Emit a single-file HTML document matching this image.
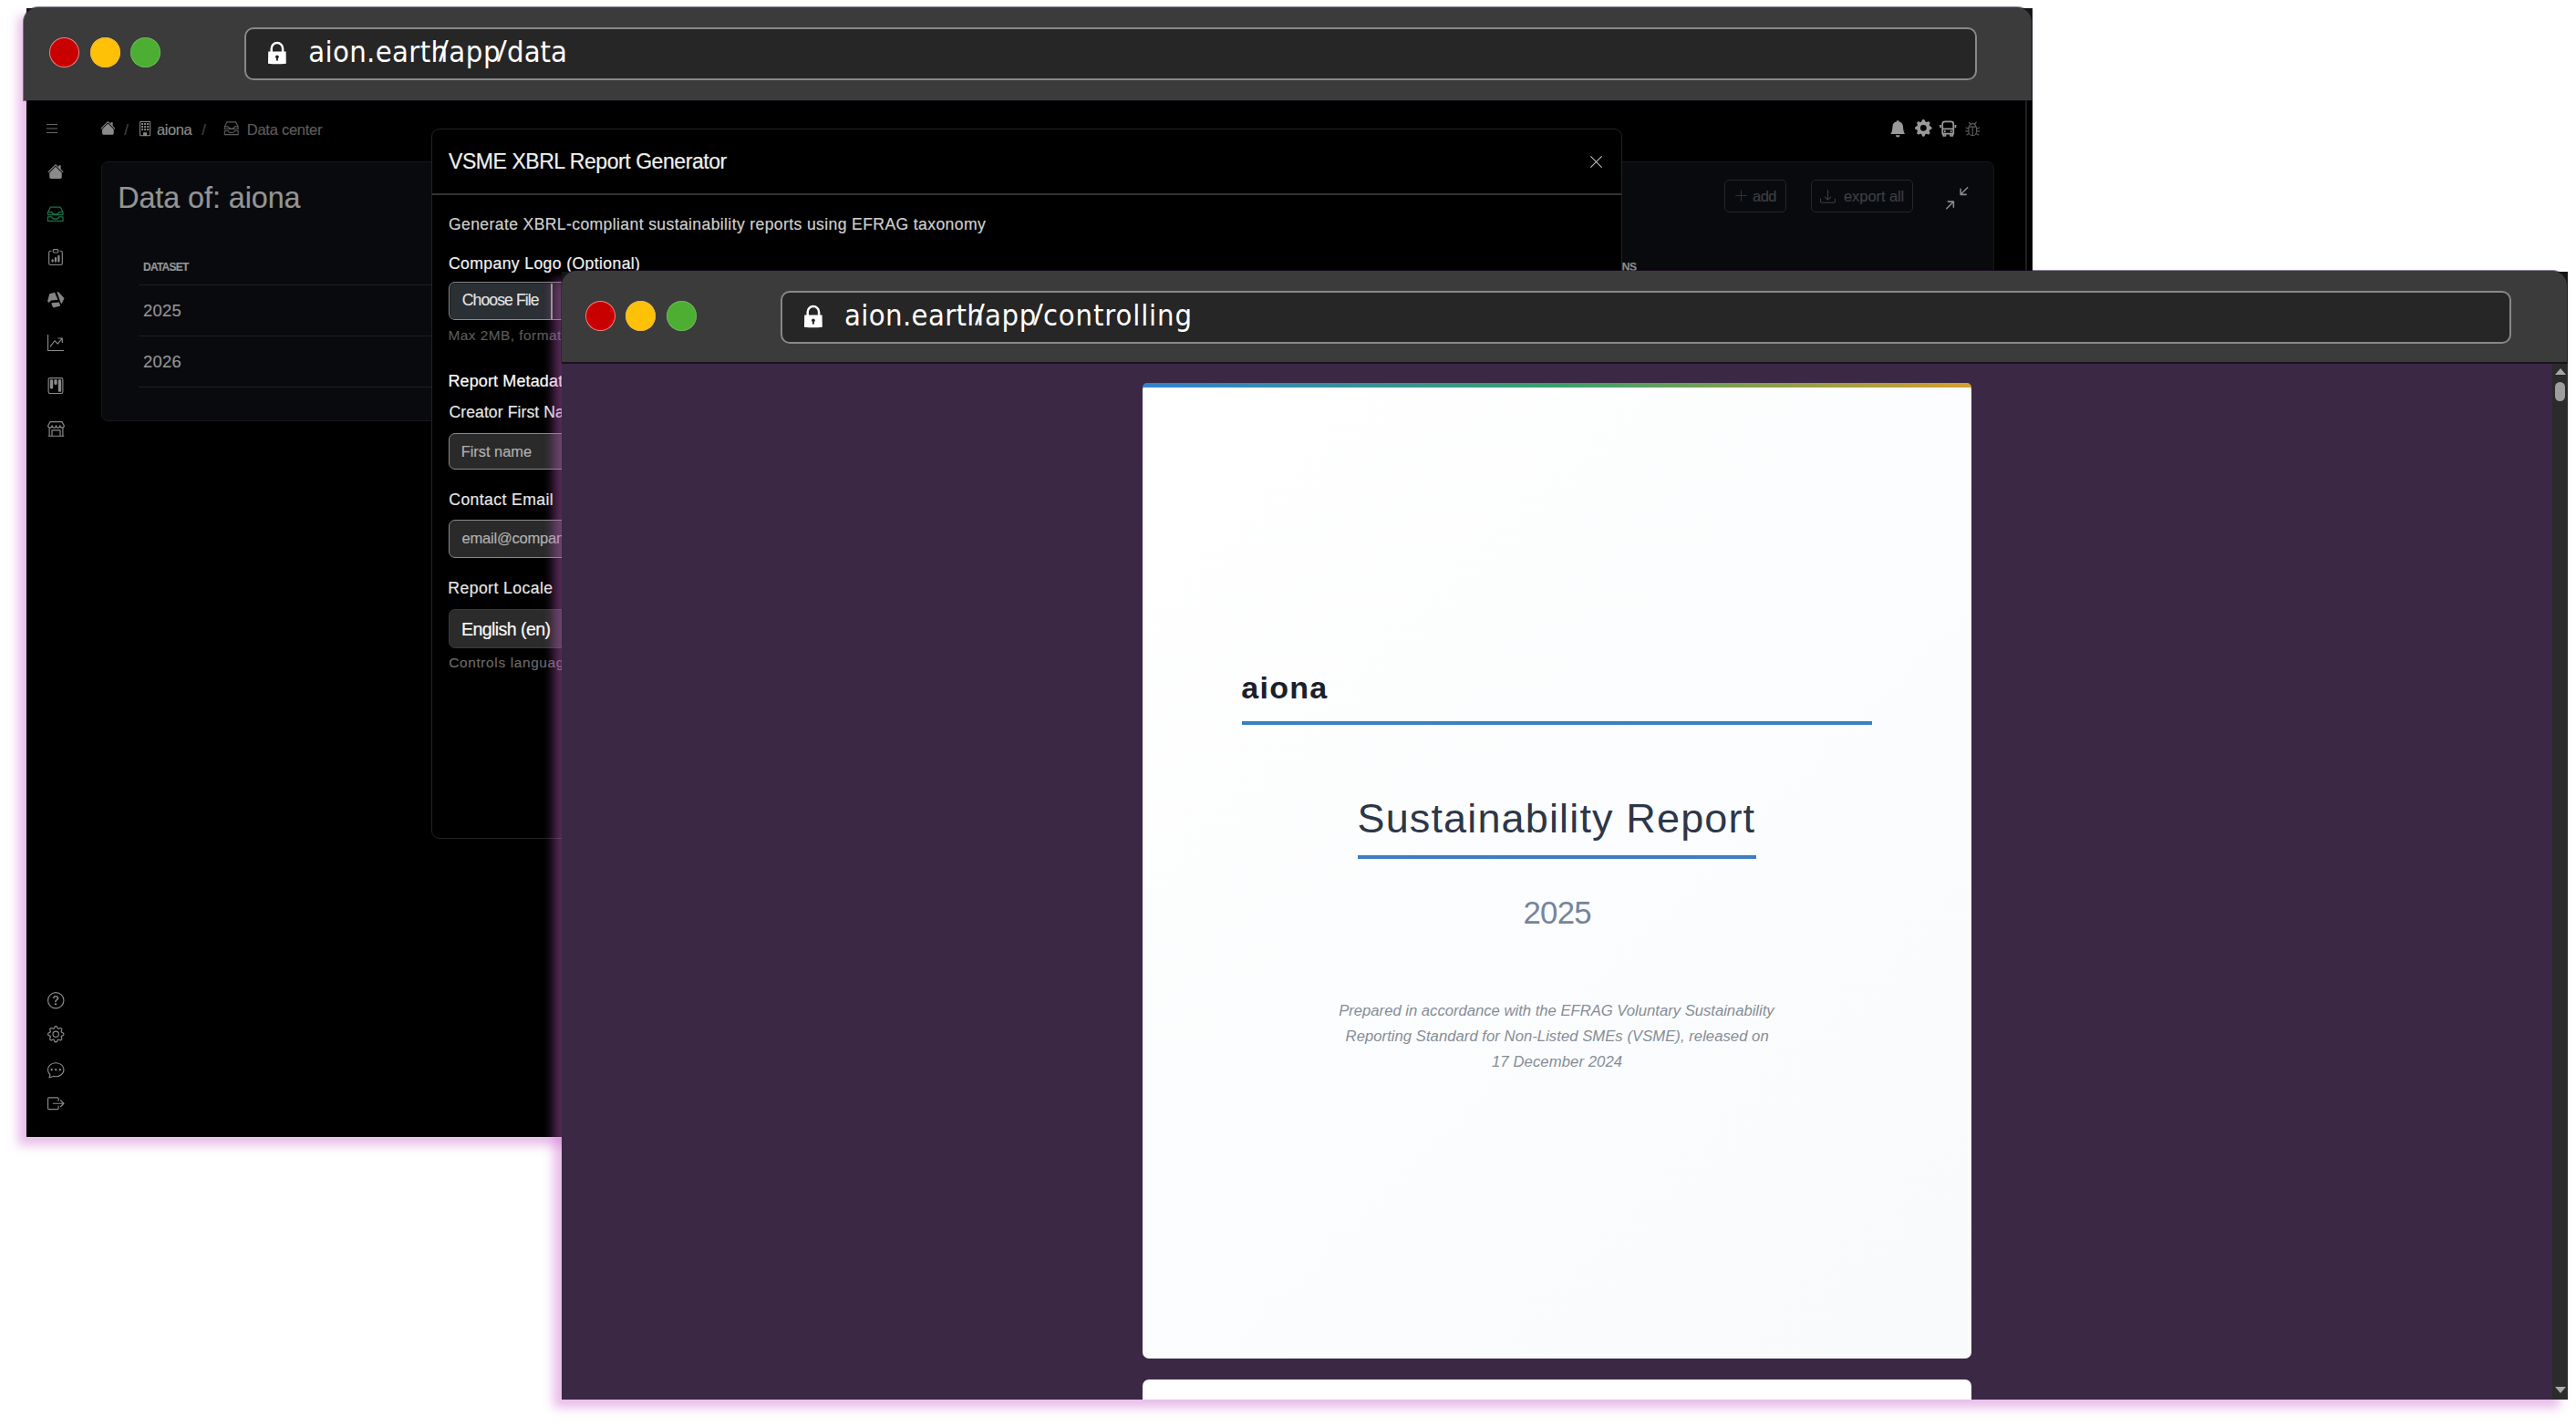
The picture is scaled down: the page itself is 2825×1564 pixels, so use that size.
<!DOCTYPE html><html lang="en"><head><meta charset="utf-8"><title>aion</title><style>
html,body{margin:0;padding:0}
body{width:2825px;height:1564px;background:#fff;position:relative;overflow:hidden;font-family:"Liberation Sans",sans-serif}
.b{position:absolute}
.t{position:absolute;white-space:pre;line-height:1}
.i{position:absolute;overflow:visible}
.w1 .t{-webkit-text-stroke:.18px}
</style></head><body>
<div class="b" style="left:29px;top:9px;width:2200px;height:1238px;box-shadow:-9px 9px 11px rgba(205,100,205,.43)"></div><div class="b" style="left:29px;top:9px;width:2200px;height:1238px;background:#000;overflow:hidden"><div class="b" style="left:-29px;top:-9px"><div class="w1"><div class="b" style="left:2221.00px;top:110.00px;width:1.50px;height:1140.00px;background:#1e1e1e"></div><svg class="i" style="left:47.60px;top:131.60px;width:18px;height:18px;color:#686868;" viewBox="0 0 16 16" fill="currentColor"><path fill-rule="evenodd" d="M2.5 12a.5.5 0 0 1 .5-.5h10a.5.5 0 0 1 0 1H3a.5.5 0 0 1-.5-.5zm0-4a.5.5 0 0 1 .5-.5h10a.5.5 0 0 1 0 1H3a.5.5 0 0 1-.5-.5zm0-4a.5.5 0 0 1 .5-.5h10a.5.5 0 0 1 0 1H3a.5.5 0 0 1-.5-.5z"/></svg><svg class="i" style="left:51.90px;top:178.90px;width:18px;height:18px;color:#8a8a8a;" viewBox="0 0 16 16" fill="currentColor"><path d="M8.707 1.5a1 1 0 0 0-1.414 0L.646 8.146a.5.5 0 0 0 .708.708L8 2.207l6.646 6.647a.5.5 0 0 0 .708-.708L13 5.793V2.5a.5.5 0 0 0-.5-.5h-1a.5.5 0 0 0-.5.5v1.293L8.707 1.5Z"/><path d="m8 3.293 6 6V13.5a1.5 1.5 0 0 1-1.5 1.5h-9A1.5 1.5 0 0 1 2 13.5V9.293l6-6Z"/></svg><svg class="i" style="left:51.45px;top:225.05px;width:19.5px;height:19.5px;color:#1c7049;" viewBox="0 0 16 16" fill="currentColor"><path fill="none" stroke="currentColor" stroke-width="1" stroke-linejoin="round" d="M1.200 6.300 3.600 1.700h8.800l2.400 4.600v2.400H1.200zM1.200 6.300h3.600c.2 1.300 1.500 1.900 3.200 1.900s3-.6 3.200-1.900h3.600M1.200 10.500h3.600c.2 1.300 1.500 1.900 3.200 1.900s3-.6 3.200-1.900h3.600v3.800H1.200z"/></svg><svg class="i" style="left:52.00px;top:272.80px;width:18px;height:18px;color:#8a8a8a;" viewBox="0 0 16 16" fill="currentColor"><path d="M4 11a1 1 0 1 1 2 0v1a1 1 0 1 1-2 0v-1zm6-4a1 1 0 1 1 2 0v5a1 1 0 1 1-2 0V7zM7 9a1 1 0 0 1 2 0v3a1 1 0 1 1-2 0V9z"/><path d="M4 1.500H3a2 2 0 0 0-2 2V14a2 2 0 0 0 2 2h10a2 2 0 0 0 2-2V3.500a2 2 0 0 0-2-2h-1v1h1a1 1 0 0 1 1 1V14a1 1 0 0 1-1 1H3a1 1 0 0 1-1-1V3.500a1 1 0 0 1 1-1h1v-1z"/><path d="M9.500 1a.5.5 0 0 1 .5.5v1a.5.5 0 0 1-.5.5h-3a.5.5 0 0 1-.5-.5v-1a.5.5 0 0 1 .5-.5h3zm-3-1A1.500 1.500 0 0 0 5 1.500v1A1.500 1.500 0 0 0 6.500 4h3A1.500 1.500 0 0 0 11 2.500v-1A1.500 1.500 0 0 0 9.500 0h-3z"/></svg><svg class="i" style="left:46px;top:314px;width:30px;height:30px" viewBox="0 0 30 30" fill="#858585"><path d="M8.300 8.300 14 6.700 17.500 14.700 10.100 15.600 7.400 17.900 6.100 16.200zM16.400 6.100 18.300 6.200 24.500 13.200 21.600 19 20.600 18.300zM10.500 18.300 18.900 17.500 20.200 21.500 12.600 23.400 10.900 20.800z"/></svg><svg class="i" style="left:52.00px;top:366.80px;width:18px;height:18px;color:#8a8a8a;" viewBox="0 0 16 16" fill="currentColor"><path fill-rule="evenodd" d="M0 0h1v15h15v1H0V0Zm10 3.500a.5.5 0 0 1 .5-.5h4a.5.5 0 0 1 .5.5v4a.5.5 0 0 1-1 0V4.900l-3.613 4.417a.5.5 0 0 1-.74.037L7.060 6.767l-3.656 5.027a.5.5 0 0 1-.808-.588l4-5.500a.5.5 0 0 1 .758-.060l2.609 2.610L13.445 4H10.500a.5.5 0 0 1-.5-.5Z"/></svg><svg class="i" style="left:52.00px;top:413.70px;width:18px;height:18px;color:#8a8a8a;" viewBox="0 0 16 16" fill="currentColor"><path d="M13.500 1a1 1 0 0 1 1 1v12a1 1 0 0 1-1 1h-11a1 1 0 0 1-1-1V2a1 1 0 0 1 1-1h11zm-11-1a2 2 0 0 0-2 2v12a2 2 0 0 0 2 2h11a2 2 0 0 0 2-2V2a2 2 0 0 0-2-2h-11z"/><path d="M6.500 3a1 1 0 0 1 1-1h1a1 1 0 0 1 1 1v3a1 1 0 0 1-1 1h-1a1 1 0 0 1-1-1V3zm-4 0a1 1 0 0 1 1-1h1a1 1 0 0 1 1 1v7a1 1 0 0 1-1 1h-1a1 1 0 0 1-1-1V3zm8 0a1 1 0 0 1 1-1h1a1 1 0 0 1 1 1v10a1 1 0 0 1-1 1h-1a1 1 0 0 1-1-1V3z"/></svg><svg class="i" style="left:51.50px;top:460.90px;width:19px;height:19px;color:#8a8a8a;" viewBox="0 0 16 16" fill="currentColor"><path fill="none" stroke="currentColor" stroke-width="1" stroke-linejoin="round" d="M2.600 1.400h10.800l2 3.400c0 1.200-.8 2-1.800 2s-1.900-.8-1.900-2c0 1.200-.8 2-1.800 2S8 6 8 4.800C8 6 7.200 6.800 6.100 6.800s-1.800-.8-1.800-2c0 1.200-.9 2-1.900 2S.6 6 .6 4.800zM1.800 7v7.500h12.400V7M.6 14.500h14.800M4.200 14.500V9.200h7.600v5.300"/></svg><svg class="i" style="left:51.75px;top:1087.65px;width:18.5px;height:18.5px;color:#8a8a8a;" viewBox="0 0 16 16" fill="currentColor"><path d="M8 15A7 7 0 1 1 8 1a7 7 0 0 1 0 14zm0 1A8 8 0 1 0 8 0a8 8 0 0 0 0 16z"/><path d="M5.255 5.786a.237.237 0 0 0 .241.247h.825c.138 0 .248-.113.266-.25.09-.656.54-1.134 1.342-1.134.686 0 1.314.343 1.314 1.168 0 .635-.374.927-.965 1.371-.673.489-1.206 1.06-1.168 1.987l.003.217a.25.25 0 0 0 .25.246h.811a.25.25 0 0 0 .25-.25v-.105c0-.718.273-.927 1.01-1.486.609-.463 1.244-.977 1.244-2.056 0-1.511-1.276-2.241-2.673-2.241-1.267 0-2.655.59-2.75 2.286zm1.557 5.763c0 .533.425.927 1.01.927.609 0 1.028-.394 1.028-.927 0-.552-.42-.94-1.029-.94-.584 0-1.009.388-1.009.94z"/></svg><svg class="i" style="left:51.75px;top:1125.45px;width:18.5px;height:18.5px;color:#8a8a8a;" viewBox="0 0 16 16" fill="currentColor"><path d="M8 4.754a3.246 3.246 0 1 0 0 6.492 3.246 3.246 0 0 0 0-6.492zM5.754 8a2.246 2.246 0 1 1 4.492 0 2.246 2.246 0 0 1-4.492 0z"/><path d="M9.796 1.343c-.527-1.79-3.065-1.79-3.592 0l-.094.319a.873.873 0 0 1-1.255.52l-.292-.16c-1.64-.892-3.433.902-2.54 2.541l.159.292a.873.873 0 0 1-.52 1.255l-.319.094c-1.79.527-1.79 3.065 0 3.592l.319.094a.873.873 0 0 1 .52 1.255l-.16.292c-.892 1.64.901 3.434 2.541 2.54l.292-.159a.873.873 0 0 1 1.255.52l.094.319c.527 1.79 3.065 1.79 3.592 0l.094-.319a.873.873 0 0 1 1.255-.52l.292.16c1.64.893 3.434-.902 2.54-2.541l-.159-.292a.873.873 0 0 1 .52-1.255l.319-.094c1.79-.527 1.79-3.065 0-3.592l-.319-.094a.873.873 0 0 1-.52-1.255l.16-.292c.893-1.64-.902-3.433-2.541-2.54l-.292.159a.873.873 0 0 1-1.255-.52l-.094-.319zm-2.633.283c.246-.835 1.428-.835 1.674 0l.094.319a1.873 1.873 0 0 0 2.693 1.115l.291-.16c.764-.415 1.6.42 1.184 1.185l-.159.292a1.873 1.873 0 0 0 1.116 2.692l.318.094c.835.246.835 1.428 0 1.674l-.319.094a1.873 1.873 0 0 0-1.115 2.693l.16.291c.415.764-.42 1.6-1.185 1.184l-.291-.159a1.873 1.873 0 0 0-2.693 1.116l-.094.318c-.246.835-1.428.835-1.674 0l-.094-.319a1.873 1.873 0 0 0-2.692-1.115l-.292.16c-.764.415-1.6-.42-1.184-1.185l.159-.291A1.873 1.873 0 0 0 1.945 8.93l-.319-.094c-.835-.246-.835-1.428 0-1.674l.319-.094A1.873 1.873 0 0 0 3.06 4.377l-.16-.292c-.415-.764.42-1.6 1.185-1.184l.292.159a1.873 1.873 0 0 0 2.692-1.115l.094-.319z"/></svg><svg class="i" style="left:51.75px;top:1163.75px;width:18.5px;height:18.5px;color:#8a8a8a;" viewBox="0 0 16 16" fill="currentColor"><path d="M5 8a1 1 0 1 1-2 0 1 1 0 0 1 2 0zm4 0a1 1 0 1 1-2 0 1 1 0 0 1 2 0zm3 1a1 1 0 1 0 0-2 1 1 0 0 0 0 2z"/><path d="m2.165 15.803.02-.004c1.83-.363 2.948-.842 3.468-1.105A9.060 9.060 0 0 0 8 15c4.418 0 8-3.134 8-7s-3.582-7-8-7-8 3.134-8 7c0 1.760.743 3.370 1.970 4.600a10.437 10.437 0 0 1-.524 2.318l-.003.011a10.722 10.722 0 0 1-.244.637c-.079.186.074.394.273.362a21.673 21.673 0 0 0 .693-.125zm.8-3.108a1 1 0 0 0-.287-.801C1.618 10.830 1 9.468 1 8c0-3.192 3.004-6 7-6s7 2.808 7 6c0 3.193-3.004 6-7 6a8.060 8.060 0 0 1-2.088-.272 1 1 0 0 0-.711.074c-.387.196-1.240.570-2.634.893a10.970 10.970 0 0 0 .398-2z"/></svg><svg class="i" style="left:51.75px;top:1200.75px;width:18.5px;height:18.5px;color:#8a8a8a;" viewBox="0 0 16 16" fill="currentColor"><path fill-rule="evenodd" d="M10 12.500a.5.5 0 0 1-.5.5h-8a.5.5 0 0 1-.5-.5v-9a.5.5 0 0 1 .5-.5h8a.5.5 0 0 1 .5.5v2a.5.5 0 0 0 1 0v-2A1.500 1.500 0 0 0 9.500 2h-8A1.500 1.500 0 0 0 0 3.500v9A1.500 1.500 0 0 0 1.500 14h8a1.500 1.500 0 0 0 1.500-1.500v-2a.5.5 0 0 0-1 0v2z"/><path fill-rule="evenodd" d="M15.854 8.354a.5.5 0 0 0 0-.708l-3-3a.5.5 0 0 0-.708.708L14.293 7.500H5.500a.5.5 0 0 0 0 1h8.793l-2.147 2.146a.5.5 0 0 0 .708.708l3-3z"/></svg><svg class="i" style="left:110.20px;top:132.40px;width:16.8px;height:16.8px;color:#8a8a8a;" viewBox="0 0 16 16" fill="currentColor"><path d="M8.707 1.5a1 1 0 0 0-1.414 0L.646 8.146a.5.5 0 0 0 .708.708L8 2.207l6.646 6.647a.5.5 0 0 0 .708-.708L13 5.793V2.5a.5.5 0 0 0-.5-.5h-1a.5.5 0 0 0-.5.5v1.293L8.707 1.5Z"/><path d="m8 3.293 6 6V13.5a1.5 1.5 0 0 1-1.5 1.5h-9A1.5 1.5 0 0 1 2 13.5V9.293l6-6Z"/></svg><span class="t" style="left:136.20px;top:134.43px;font-size:16.5px;color:#444;">/</span><svg class="i" style="left:151.40px;top:132.80px;width:16.2px;height:16.2px;color:#8a8a8a;" viewBox="0 0 16 16" fill="currentColor"><path d="M4 2.500a.5.5 0 0 1 .5-.5h1a.5.5 0 0 1 .5.5v1a.5.5 0 0 1-.5.5h-1a.5.5 0 0 1-.5-.5v-1Zm3 0a.5.5 0 0 1 .5-.5h1a.5.5 0 0 1 .5.5v1a.5.5 0 0 1-.5.5h-1a.5.5 0 0 1-.5-.5v-1Zm3.500-.5a.5.5 0 0 0-.5.5v1a.5.5 0 0 0 .5.5h1a.5.5 0 0 0 .5-.5v-1a.5.5 0 0 0-.5-.5h-1ZM4 5.500a.5.5 0 0 1 .5-.5h1a.5.5 0 0 1 .5.5v1a.5.5 0 0 1-.5.5h-1a.5.5 0 0 1-.5-.5v-1ZM7.500 5a.5.5 0 0 0-.5.5v1a.5.5 0 0 0 .5.5h1a.5.5 0 0 0 .5-.5v-1a.5.5 0 0 0-.5-.5h-1Zm2.500.5a.5.5 0 0 1 .5-.5h1a.5.5 0 0 1 .5.5v1a.5.5 0 0 1-.5.5h-1a.5.5 0 0 1-.5-.5v-1ZM4.500 8a.5.5 0 0 0-.5.5v1a.5.5 0 0 0 .5.5h1a.5.5 0 0 0 .5-.5v-1a.5.5 0 0 0-.5-.5h-1Zm2.500.5a.5.5 0 0 1 .5-.5h1a.5.5 0 0 1 .5.5v1a.5.5 0 0 1-.5.5h-1a.5.5 0 0 1-.5-.5v-1Zm3.500-.5a.5.5 0 0 0-.5.5v1a.5.5 0 0 0 .5.5h1a.5.5 0 0 0 .5-.5v-1a.5.5 0 0 0-.5-.5h-1Z"/><path d="M2 1a1 1 0 0 1 1-1h10a1 1 0 0 1 1 1v14a1 1 0 0 1-1 1H3a1 1 0 0 1-1-1V1Zm11 0H3v14h3v-2.500a.5.5 0 0 1 .5-.5h3a.5.5 0 0 1 .5.5V15h3V1Z"/></svg><span class="t" style="left:172.00px;top:134.43px;font-size:16.5px;color:#8a8a8a;letter-spacing:-0.449px;">aiona</span><span class="t" style="left:221.20px;top:134.43px;font-size:16.5px;color:#444;">/</span><svg class="i" style="left:245.45px;top:132.15px;width:17.5px;height:17.5px;color:#5c5c5c;" viewBox="0 0 16 16" fill="currentColor"><path fill="none" stroke="currentColor" stroke-width="1" stroke-linejoin="round" d="M1.200 6.300 3.600 1.700h8.800l2.400 4.600v2.400H1.200zM1.200 6.300h3.600c.2 1.300 1.500 1.900 3.200 1.900s3-.6 3.200-1.900h3.600M1.200 10.500h3.600c.2 1.300 1.500 1.900 3.200 1.900s3-.6 3.200-1.900h3.600v3.800H1.200z"/></svg><span class="t" style="left:270.80px;top:134.43px;font-size:16.5px;color:#5c5c5c;letter-spacing:-0.260px;">Data center</span><svg class="i" style="left:2072.25px;top:131.55px;width:18.5px;height:18.5px;color:#9a9a9a;" viewBox="0 0 16 16" fill="currentColor"><path d="M8 16a2 2 0 0 0 2-2H6a2 2 0 0 0 2 2zm.995-14.901a1 1 0 1 0-1.99 0A5.002 5.002 0 0 0 3 6c0 1.098-.5 6-2 7h14c-1.500-1-2-5.902-2-7 0-2.420-1.720-4.440-4.005-4.901z"/></svg><svg class="i" style="left:2099.55px;top:131.45px;width:18.7px;height:18.7px;color:#9a9a9a;" viewBox="0 0 16 16" fill="currentColor"><path d="M9.405 1.05c-.413-1.4-2.397-1.4-2.81 0l-.1.34a1.464 1.464 0 0 1-2.105.872l-.31-.17c-1.283-.698-2.686.705-1.987 1.987l.169.311c.446.82.023 1.841-.872 2.105l-.34.1c-1.4.413-1.4 2.397 0 2.81l.34.1a1.464 1.464 0 0 1 .872 2.105l-.17.31c-.698 1.283.705 2.686 1.987 1.987l.311-.169a1.464 1.464 0 0 1 2.105.872l.1.34c.413 1.4 2.397 1.4 2.81 0l.1-.34a1.464 1.464 0 0 1 2.105-.872l.31.17c1.283.698 2.686-.705 1.987-1.987l-.169-.311a1.464 1.464 0 0 1 .872-2.105l.34-.1c1.4-.413 1.4-2.397 0-2.81l-.34-.1a1.464 1.464 0 0 1-.872-2.105l.17-.31c.698-1.283-.705-2.686-1.987-1.987l-.311.169a1.464 1.464 0 0 1-2.105-.872l-.1-.34zM8 10.93a2.929 2.929 0 1 1 0-5.86 2.929 2.929 0 0 1 0 5.858z"/></svg><svg class="i" style="left:2127.05px;top:131.55px;width:18.5px;height:18.5px;color:#9a9a9a;" viewBox="0 0 16 16" fill="currentColor"><path fill="none" stroke="currentColor" stroke-width="1.500" stroke-linejoin="round" d="M2.800 12.700V3.400c0-1.300 1-2.200 2.300-2.200h5.800c1.300 0 2.300.9 2.300 2.200v9.300zM2.800 8.200h10.400M3.600 12.700v2h2v-2M10.400 12.700v2h2v-2M.9 4.400v2.800M15.100 4.400v2.800"/><circle cx="5" cy="10.500" r=".9"/><circle cx="11" cy="10.500" r=".9"/></svg><svg class="i" style="left:2154.45px;top:131.55px;width:18.5px;height:18.5px;color:#5a5a5a;" viewBox="0 0 16 16" fill="currentColor"><path fill="none" stroke="currentColor" stroke-width="1" stroke-linecap="round" d="M4.300 6.200h7.400v4.300c0 2.200-1.600 3.900-3.700 3.900s-3.700-1.700-3.700-3.900zM8 6.200v8.200M5.100 6.200c0-1.800 1.300-3 2.900-3s2.900 1.200 2.900 3M5.900 3.700 4.600 1.900M10.100 3.700l1.300-1.800M4.300 8.200 1.800 7M11.700 8.200 14.200 7M4.300 10.300H1.600M11.700 10.300h2.700M4.800 12.300l-2.400 1.500M11.200 12.300l2.400 1.500"/></svg><div class="b" style="left:110.50px;top:177.00px;width:2076.00px;height:285.00px;background:#090a0d;border:1px solid #16181b;border-radius:7px;box-sizing:border-box"></div><span class="t" style="left:129.20px;top:201.16px;font-size:32.3px;color:#949494;letter-spacing:-0.057px;">Data of: aiona</span><span class="t" style="left:157.00px;top:287.34px;font-size:12px;color:#949494;font-weight:700;letter-spacing:-0.759px;">DATASET</span><span class="t" style="left:1744.00px;top:286.94px;font-size:12px;color:#8c8c8c;font-weight:700;letter-spacing:-0.499px;">ACTIONS</span><div class="b" style="left:152.40px;top:312.00px;width:2010.00px;height:1.40px;background:#1d1f22"></div><div class="b" style="left:152.40px;top:367.90px;width:2010.00px;height:1.40px;background:#1d1f22"></div><div class="b" style="left:152.40px;top:423.90px;width:2010.00px;height:1.40px;background:#1d1f22"></div><span class="t" style="left:157.00px;top:331.92px;font-size:18.4px;color:#949494;letter-spacing:0.239px;">2025</span><span class="t" style="left:157.00px;top:388.02px;font-size:18.4px;color:#949494;letter-spacing:0.239px;">2026</span><div class="b" style="left:1891.10px;top:197.30px;width:67.50px;height:35.50px;border:1.5px solid #23262b;border-radius:5px;box-sizing:border-box"></div><svg class="i" style="left:1901.40px;top:206.30px;width:17px;height:17px;color:#2f3237;" viewBox="0 0 16 16" fill="currentColor"><path fill-rule="evenodd" d="M8 2a.5.5 0 0 1 .5.5v5h5a.5.5 0 0 1 0 1h-5v5a.5.5 0 0 1-1 0v-5h-5a.5.5 0 0 1 0-1h5v-5A.5.5 0 0 1 8 2Z"/></svg><span class="t" style="left:1922.00px;top:207.03px;font-size:16.5px;color:#3c3f44;letter-spacing:-0.527px;">add</span><div class="b" style="left:1986.00px;top:197.30px;width:111.70px;height:35.50px;border:1.5px solid #23262b;border-radius:5px;box-sizing:border-box"></div><svg class="i" style="left:1996.00px;top:206.60px;width:17px;height:17px;color:#3c3f44;" viewBox="0 0 16 16" fill="currentColor"><path d="M.5 9.900a.5.5 0 0 1 .5.5v2.500a1 1 0 0 0 1 1h12a1 1 0 0 0 1-1v-2.500a.5.5 0 0 1 1 0v2.500a2 2 0 0 1-2 2H2a2 2 0 0 1-2-2v-2.500a.5.5 0 0 1 .5-.5z"/><path d="M7.646 11.854a.5.5 0 0 0 .708 0l3-3a.5.5 0 0 0-.708-.708L8.500 10.293V1.500a.5.5 0 0 0-1 0v8.793L5.354 8.146a.5.5 0 1 0-.708.708l3 3z"/></svg><span class="t" style="left:2022.00px;top:207.03px;font-size:16.5px;color:#3c3f44;letter-spacing:-0.076px;">export all</span><svg class="i" style="left:2134.45px;top:205.45px;width:24.5px;height:24.5px;color:#8a8a8a;" viewBox="0 0 16 16" fill="currentColor"><path fill-rule="evenodd" d="M.172 15.828a.5.5 0 0 0 .707 0l4.096-4.096V14.500a.5.5 0 1 0 1 0v-3.975a.5.5 0 0 0-.5-.5H1.500a.5.5 0 0 0 0 1h2.768L.172 15.121a.5.5 0 0 0 0 .707zM15.828.172a.5.5 0 0 0-.707 0l-4.096 4.096V1.500a.5.5 0 1 0-1 0v3.975a.5.5 0 0 0 .5.5H14.500a.5.5 0 0 0 0-1h-2.768L15.828.879a.5.5 0 0 0 0-.707z"/></svg><div class="b" style="left:473.00px;top:141.00px;width:1305.50px;height:779.00px;background:#000;border:1.5px solid #232323;border-radius:9px;box-sizing:border-box"></div><div class="b" style="left:474.00px;top:212.30px;width:1303.50px;height:1.50px;background:#333"></div><span class="t" style="left:492.00px;top:166.23px;font-size:23px;color:#f0f0f0;letter-spacing:-0.439px;">VSME XBRL Report Generator</span><svg class="i" style="left:1741.50px;top:169.20px;width:17px;height:17px;color:#bdbdbd;" viewBox="0 0 16 16" fill="currentColor"><path d="M2.146 2.854a.5.5 0 1 1 .708-.708L8 7.293l5.146-5.147a.5.5 0 0 1 .708.708L8.707 8l5.147 5.146a.5.5 0 0 1-.708.708L8 8.707l-5.146 5.147a.5.5 0 0 1-.708-.708L7.293 8 2.146 2.854Z"/></svg><span class="t" style="left:492.00px;top:238.40px;font-size:17.6px;color:#cfcfcf;letter-spacing:0.371px;">Generate XBRL-compliant sustainability reports using EFRAG taxonomy</span><span class="t" style="left:492.00px;top:280.90px;font-size:17.6px;color:#f2f2f2;letter-spacing:0.386px;">Company Logo (Optional)</span><div class="b" style="left:492.00px;top:309.30px;width:1268.00px;height:42.20px;background:#1c1c1c;border:1.5px solid #8a8a8a;border-radius:7px;box-sizing:border-box;overflow:hidden"></div><div class="b" style="left:493.50px;top:310.80px;width:110.50px;height:39.20px;background:#2b3035;border-radius:5px 0 0 5px"></div><div class="b" style="left:604.00px;top:310.80px;width:1.50px;height:39.20px;background:#9a9a9a"></div><span class="t" style="left:506.70px;top:321.00px;font-size:17.6px;color:#e4e4e4;letter-spacing:-0.899px;-webkit-text-stroke:.12px #e4e4e4;">Choose File</span><span class="t" style="left:617.00px;top:321.00px;font-size:17.6px;color:#e4e4e4;">No file chosen</span><span class="t" style="left:491.40px;top:359.76px;font-size:15.4px;color:#5a5a5a;letter-spacing:0.482px;">Max 2MB, formats: PNG, JPG, SVG</span><span class="t" style="left:491.40px;top:409.06px;font-size:18px;color:#fafafa;letter-spacing:0.129px;-webkit-text-stroke:.22px #fafafa;">Report Metadata</span><span class="t" style="left:492.40px;top:443.80px;font-size:17.6px;color:#e6e6e6;letter-spacing:0.090px;">Creator First Name</span><div class="b" style="left:492.00px;top:474.60px;width:600.00px;height:40.80px;background:#2a2a2a;border:1.5px solid #8a8a8a;border-radius:7px;box-sizing:border-box"></div><span class="t" style="left:505.70px;top:487.02px;font-size:16.4px;color:#b0b0b0;">First name</span><span class="t" style="left:492.30px;top:540.20px;font-size:17.6px;color:#e6e6e6;letter-spacing:0.408px;">Contact Email</span><div class="b" style="left:492.00px;top:570.40px;width:600.00px;height:41.60px;background:#2a2a2a;border:1.5px solid #8a8a8a;border-radius:7px;box-sizing:border-box"></div><span class="t" style="left:506.50px;top:583.05px;font-size:16.6px;color:#b0b0b0;letter-spacing:-0.250px;">email@company.com</span><span class="t" style="left:491.30px;top:637.40px;font-size:17.6px;color:#e6e6e6;letter-spacing:0.437px;">Report Locale</span><div class="b" style="left:492.00px;top:667.80px;width:1268.00px;height:43.50px;background:#2b2b2b;border:1px solid #3a3a3a;border-radius:7px;box-sizing:border-box"></div><span class="t" style="left:506.00px;top:680.91px;font-size:19.6px;color:#fafafa;letter-spacing:-0.593px;">English (en)</span><span class="t" style="left:492.20px;top:719.46px;font-size:15.4px;color:#6a6a6a;letter-spacing:0.654px;">Controls language of the generated report</span></div></div></div><div class="b" style="left:0px;top:0px"><div class="b" style="left:29.00px;top:9.00px;width:2200.00px;height:101.00px;background:#161616"></div><div class="b" style="left:26.00px;top:8.00px;width:2201.50px;height:101.80px;background:#3b3b3b;border-radius:16px 16px 0 0;box-shadow:0 0 0 1px rgba(30,14,40,.5)"></div><div class="b" style="left:53.80px;top:40.90px;width:33.00px;height:33.00px;background:#c80000;border-radius:50%;box-shadow:inset 0 0 0 1px #e08a8a"></div><div class="b" style="left:98.50px;top:40.90px;width:33.00px;height:33.00px;background:#ffc107;border-radius:50%;box-shadow:inset 0 0 0 1px #e8b84a"></div><div class="b" style="left:143.30px;top:40.90px;width:33.00px;height:33.00px;background:#4cae32;border-radius:50%;box-shadow:inset 0 0 0 1px #6fb35c"></div><div class="b" style="left:268.00px;top:29.80px;width:1900.00px;height:58.40px;background:#262626;border:2px solid #888;border-radius:10px;box-sizing:border-box"></div><svg class="i" style="left:292px;top:44px;width:24px;height:28px" viewBox="0 0 24 28"><path d="M5.7 13V9.2a6.2 6.2 0 0 1 12.400 0V13" fill="none" stroke="#fff" stroke-width="2.500"/><path d="M2.200 12.400h19.400l.2 13.400q-9.900 1-19.800 0z" fill="#fff"/><circle cx="11.900" cy="18.300" r="1.900" fill="#262626"/><path d="M11.100 19h1.600l.3 3.600h-2.200z" fill="#262626"/></svg><span class="t" style="left:338.30px;top:40.99px;font-size:32.5px;color:#fff;font-family:'DejaVu Sans Condensed', 'DejaVu Sans', sans-serif;letter-spacing:0.341px;">aion.earth</span><span class="t" style="left:481.00px;top:42.40px;font-size:28px;color:#fff;font-family:'DejaVu Sans Condensed', 'DejaVu Sans', sans-serif;transform:scaleX(1.28);transform-origin:0 0;">/</span><span class="t" style="left:492.30px;top:40.99px;font-size:32.5px;color:#fff;font-family:'DejaVu Sans Condensed', 'DejaVu Sans', sans-serif;letter-spacing:0.608px;">app</span><span class="t" style="left:545.10px;top:42.40px;font-size:28px;color:#fff;font-family:'DejaVu Sans Condensed', 'DejaVu Sans', sans-serif;transform:scaleX(1.28);transform-origin:0 0;">/</span><span class="t" style="left:556.10px;top:40.99px;font-size:32.5px;color:#fff;font-family:'DejaVu Sans Condensed', 'DejaVu Sans', sans-serif;letter-spacing:-0.014px;">data</span></div>
<div class="b" style="left:616.3px;top:298px;width:2199.5px;height:1236.7px;box-shadow:-9px 9px 11px rgba(205,100,205,.43)"></div><div class="b" style="left:616.3px;top:298px;width:2199.5px;height:1236.7px;background:#3a2845;overflow:hidden"><div class="b" style="left:-616.3px;top:-298px"><div class="b" style="left:2798.50px;top:398.00px;width:18.00px;height:1140.00px;background:#2b2b2b"></div><svg class="i" style="left:2801.5px;top:403.5px;width:12px;height:7px" viewBox="0 0 12 7"><path d="M6 0 12 7H0z" fill="#a8a8a8"/></svg><svg class="i" style="left:2801.5px;top:1520.5px;width:12px;height:7px" viewBox="0 0 12 7"><path d="M0 0h12L6 7z" fill="#a8a8a8"/></svg><div class="b" style="left:2802.00px;top:418.50px;width:10.80px;height:21.80px;background:#9e9e9e;border-radius:5.4px"></div><div class="b" style="left:1253.20px;top:420.40px;width:908.80px;height:1069.20px;background:linear-gradient(135deg,#ffffff 0%,#f8fafc 100%);border-radius:7px;overflow:hidden"></div><div class="b" style="left:1253.20px;top:420.40px;width:908.80px;height:5.00px;background:linear-gradient(90deg,#3182ce 0%,#38a169 50%,#d69e2e 100%);border-radius:7px 7px 0 0"></div><span class="t" style="left:1361.30px;top:737.02px;font-size:34px;color:#1a202c;font-weight:700;letter-spacing:1.277px;">aiona</span><div class="b" style="left:1361.70px;top:791.00px;width:691.30px;height:3.80px;background:#3a7fc4"></div><span class="t" style="left:1488.50px;top:875.21px;font-size:45px;color:#2d3748;letter-spacing:1.145px;">Sustainability Report</span><div class="b" style="left:1489.00px;top:937.50px;width:436.60px;height:4.20px;background:#3a7fc4"></div><span class="t" style="left:1670.40px;top:983.74px;font-size:34.8px;color:#76849a;letter-spacing:-0.719px;">2025</span><span class="t" style="left:1468.20px;top:1100.86px;font-size:16.7px;color:#868d97;font-style:italic;letter-spacing:-0.024px;">Prepared in accordance with the EFRAG Voluntary Sustainability</span><span class="t" style="left:1475.60px;top:1129.16px;font-size:16.7px;color:#868d97;font-style:italic;letter-spacing:0.022px;">Reporting Standard for Non-Listed SMEs (VSME), released on</span><span class="t" style="left:1636.00px;top:1156.86px;font-size:16.7px;color:#868d97;font-style:italic;letter-spacing:0.076px;">17 December 2024</span><div class="b" style="left:1253.20px;top:1513.00px;width:908.80px;height:200.00px;background:#fff;border-radius:7px"></div></div></div><div class="b" style="left:587.8px;top:288.9px"><div class="b" style="left:28.50px;top:9.10px;width:2199.50px;height:101.00px;background:#161616"></div><div class="b" style="left:28.20px;top:8.30px;width:2198.60px;height:100.30px;background:#3b3b3b;border-radius:16px 16px 0 0;box-shadow:0 0 0 1px rgba(30,14,40,.5)"></div><div class="b" style="left:53.80px;top:40.90px;width:33.00px;height:33.00px;background:#c80000;border-radius:50%;box-shadow:inset 0 0 0 1px #e08a8a"></div><div class="b" style="left:98.50px;top:40.90px;width:33.00px;height:33.00px;background:#ffc107;border-radius:50%;box-shadow:inset 0 0 0 1px #e8b84a"></div><div class="b" style="left:143.30px;top:40.90px;width:33.00px;height:33.00px;background:#4cae32;border-radius:50%;box-shadow:inset 0 0 0 1px #6fb35c"></div><div class="b" style="left:268.00px;top:29.80px;width:1898.60px;height:58.40px;background:#262626;border:2px solid #888;border-radius:10px;box-sizing:border-box"></div><svg class="i" style="left:292px;top:44px;width:24px;height:28px" viewBox="0 0 24 28"><path d="M5.7 13V9.2a6.2 6.2 0 0 1 12.400 0V13" fill="none" stroke="#fff" stroke-width="2.500"/><path d="M2.200 12.400h19.400l.2 13.400q-9.900 1-19.800 0z" fill="#fff"/><circle cx="11.900" cy="18.300" r="1.900" fill="#262626"/><path d="M11.100 19h1.600l.3 3.600h-2.200z" fill="#262626"/></svg><span class="t" style="left:338.30px;top:40.99px;font-size:32.5px;color:#fff;font-family:'DejaVu Sans Condensed', 'DejaVu Sans', sans-serif;letter-spacing:0.341px;">aion.earth</span><span class="t" style="left:481.00px;top:42.40px;font-size:28px;color:#fff;font-family:'DejaVu Sans Condensed', 'DejaVu Sans', sans-serif;transform:scaleX(1.28);transform-origin:0 0;">/</span><span class="t" style="left:492.30px;top:40.99px;font-size:32.5px;color:#fff;font-family:'DejaVu Sans Condensed', 'DejaVu Sans', sans-serif;letter-spacing:0.608px;">app</span><span class="t" style="left:545.10px;top:42.40px;font-size:28px;color:#fff;font-family:'DejaVu Sans Condensed', 'DejaVu Sans', sans-serif;transform:scaleX(1.28);transform-origin:0 0;">/</span><span class="t" style="left:556.10px;top:40.99px;font-size:32.5px;color:#fff;font-family:'DejaVu Sans Condensed', 'DejaVu Sans', sans-serif;letter-spacing:0.855px;">controlling</span></div>
</body></html>
